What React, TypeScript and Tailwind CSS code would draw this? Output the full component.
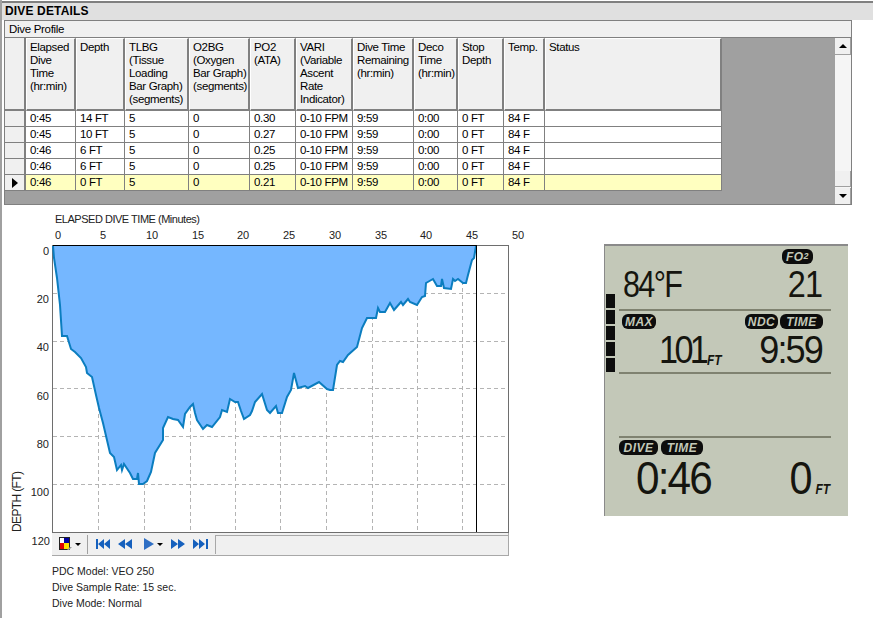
const columns = [
  ['Elapsed', 'Dive', 'Time', '(hr:min)'],
  ['Depth'],
  ['TLBG', '(Tissue', 'Loading', 'Bar Graph)', '(segments)'],
  ['O2BG', '(Oxygen', 'Bar Graph)', '(segments)'],
  ['PO2', '(ATA)'],
  ['VARI', '(Variable', 'Ascent', 'Rate', 'Indicator)'],
  ['Dive Time', 'Remaining', '(hr:min)'],
  ['Deco', 'Time', '(hr:min)'],
  ['Stop', 'Depth'],
  ['Temp.'],
  ['Status'],
];

const rows = [
  ['0:45', '14 FT', '5', '0', '0.30', '0-10 FPM', '9:59', '0:00', '0 FT', '84 F', ''],
  ['0:45', '10 FT', '5', '0', '0.27', '0-10 FPM', '9:59', '0:00', '0 FT', '84 F', ''],
  ['0:46', '6 FT', '5', '0', '0.25', '0-10 FPM', '9:59', '0:00', '0 FT', '84 F', ''],
  ['0:46', '6 FT', '5', '0', '0.25', '0-10 FPM', '9:59', '0:00', '0 FT', '84 F', ''],
  ['0:46', '0 FT', '5', '0', '0.21', '0-10 FPM', '9:59', '0:00', '0 FT', '84 F', ''],
];

const profile =
  '53,246 54,258 57,278 60,305 62,336 67,336 71,349 75,352 81,358 86,367 87,373 92,377 96,395 99,408 103,423 110,453 114,457 117,470 121,465 122,470 124,464 130,473 133,479 137,479 138,473 139,484 143,484 147,481 151,472 155,453 163,440 163,428 168,417 173,419 178,420 183,427 185,414 190,407 193,404 195,413 197,420 203,429 207,425 212,427 220,417 222,410 227,412 230,399 235,402 238,402 241,411 244,419 250,415 252,411 255,402 262,394 267,410 270,413 276,406 278,413 282,413 287,397 291,390 294,373 298,388 305,386 308,388 319,382 327,389 330,390 333,390 337,365 340,361 343,362 348,355 357,347 362,328 367,318 376,318 378,308 380,312 385,312 390,303 394,310 401,302 403,305 408,299 410,302 417,305 422,297 425,296 426,283 433,279 437,286 441,286 442,279 444,288 451,289 453,279 455,281 458,279 463,283 466,283 468,275 472,260 474,258 476,246';

const xTicks = [
  [58, 98.5, '0'],
  [103, 144.5, '5'],
  [152, 190.5, '10'],
  [198, 235.5, '15'],
  [243, 280.5, '20'],
  [289, 326.5, '25'],
  [335, 372.5, '30'],
  [381, 417.5, '35'],
  [426, 462.5, '40'],
  [472, 0, '45'],
  [518, 0, '50'],
] as const;

const yTicks = [
  [255, 0, '0'],
  [303, 293.5, '20'],
  [351, 341.5, '40'],
  [400, 388.5, '60'],
  [448, 436.5, '80'],
  [496, 484.5, '100'],
] as const;

const ProfileChart = () => (
  <svg width="530" height="323" viewBox="0 210 530 323" className="block text-[11px]">
    <text x="55" y="223" fill="#222" textLength="145">ELAPSED DIVE TIME (Minutes)</text>
    {xTicks.map(([tx, , label]) => (
      <text key={label} x={tx} y="239" textAnchor="middle" fill="#222">{label}</text>
    ))}
    {yTicks.map(([ty, , label]) => (
      <text key={label} x="49" y={ty} textAnchor="end" fill="#222">{label}</text>
    ))}
    <text transform="translate(21 532) rotate(-90)" fill="#222" fontSize="12" textLength="61">DEPTH (FT)</text>

    <rect x="52.5" y="245.5" width="456" height="287" fill="#fff" stroke="#6e6e6e" />
    <g stroke="#b4b4b4" strokeDasharray="4 3">
      {xTicks.filter(([, gx]) => gx > 0).map(([, gx, label]) => (
        <line key={label} x1={gx} y1="246" x2={gx} y2="532" />
      ))}
      {yTicks.filter(([, gy]) => gy > 0).map(([, gy, label]) => (
        <line key={label} x1="53" y1={gy} x2="508" y2={gy} />
      ))}
    </g>
    <polygon points={`53,246 ${profile} 476,246`} fill="#75b7ff" />
    <polyline points={profile} fill="none" stroke="#0b7dbf" strokeWidth="2" />
    <line x1="53" y1="245.5" x2="477" y2="245.5" stroke="#000" />
    <line x1="476.5" y1="245" x2="476.5" y2="532" stroke="#000" />
  </svg>
);

const Triangle = ({ d }: { d: string }) => (
  <svg width="16" height="12" viewBox="0 0 16 12" className="block">
    <path d={d} fill="#1560bd" />
  </svg>
);

const ChartToolbar = () => (
  <div className="flex">
    <div className="w-[52px] pt-[1px] pr-[2px] text-right text-[11px] leading-[14px] text-[#222]">120</div>
    <div className="flex h-[23px] w-[458px] items-center border-r border-b border-[#a8a8a8] bg-[#f0f0f0] pl-[7px]">
      <svg width="13" height="14" viewBox="0 0 13 14" className="block">
        <rect x="0.5" y="0.5" width="10" height="12" fill="#fff" stroke="#222" />
        <rect x="5" y="1" width="5" height="5" fill="#0000a0" />
        <rect x="1" y="6" width="4" height="6" fill="#e00000" />
        <rect x="5" y="6" width="5" height="6" fill="#ffe000" />
        <path d="M11 10h2l-3 3h-2z" fill="#999" />
      </svg>
      <span className="ml-[3px] h-0 w-0 border-x-[3px] border-t-[3px] border-x-transparent border-t-black" />
      <span className="mx-[6px] h-[19px] w-px bg-[#a0a0a0]" />
      <div className="flex w-[124px] items-center pl-[1px]">
        <Triangle d="M1 1h2v10H1zM3 6l6-5v10zM9 6l6-5v10z" />
        <span className="w-[7px]" />
        <Triangle d="M0 6l7-5v10zM7 6l7-5v10z" />
        <span className="w-[10px]" />
        <svg width="11" height="12" viewBox="0 0 11 12" className="block">
          <path d="M0 0l10 6-10 6z" fill="#2f6fc4" />
        </svg>
        <span className="mx-[2px] h-0 w-0 border-x-[3px] border-t-[3px] border-x-transparent border-t-black" />
        <span className="w-[6px]" />
        <Triangle d="M0 1l7 5-7 5zM7 1l7 5-7 5z" />
        <span className="w-[6px]" />
        <Triangle d="M0 1l6 5-6 5zM6 1l6 5-6 5zM13 1h2v10h-2z" />
      </div>
      <div className="ml-[-3px] h-[19px] flex-1 border-t border-l border-[#a8a8a8]" />
    </div>
  </div>
);

const Pill = ({ children, w }: { children: React.ReactNode; w: string }) => (
  <span className={`flex h-[15px] items-center justify-center rounded-[6px] bg-[#0d0d0d] text-[12px] leading-none font-bold tracking-[0.5px] text-[#c3c8b8] italic ${w}`}>
    {children}
  </span>
);

const Segments = () => (
  <div className="absolute top-[48px] left-[1px] flex w-[9px] flex-col gap-[2px]">
    {[0, 1, 2, 3, 4].map((i) => (
      <div key={i} className="h-[14px] bg-[#0d0d0d]" />
    ))}
  </div>
);

const LcdPanel = () => (
  <div className="relative mt-[39px] ml-[95px] flex h-[272px] w-[244px] flex-col border-t-2 border-l border-[#8a8a8a] bg-[#c3c8b8] text-[#15150f]">
    <Segments />
    <div className="flex justify-end pt-[3px] pr-[35px]">
      <Pill w="w-[31px]">
        FO<span className="text-[9px]">2</span>
      </Pill>
    </div>
    <div className="flex h-[45px] justify-between pt-[1px] pr-[26px] pl-[18px] text-[36px] leading-[40px]">
      <span className="origin-left scale-x-[0.85] tracking-[-2px]">84°F</span>
      <span className="origin-right scale-x-[0.9] tracking-[-1px]">21</span>
    </div>
    <div className="mr-[17px] ml-[14px] h-[2px] bg-[#7f8270]" />
    <div className="flex justify-between pt-[3px] pr-[25px] pl-[17px]">
      <Pill w="w-[34px]">MAX</Pill>
      <div className="flex gap-[2px]">
        <Pill w="w-[33px]">NDC</Pill>
        <Pill w="w-[43px]">TIME</Pill>
      </div>
    </div>
    <div className="flex h-[43px] items-end justify-between pr-[26px] pb-[3px] pl-[54px]">
      <div className="flex items-end">
        <span className="origin-left scale-x-[0.9] text-[38px] leading-[38px] tracking-[-4px]">101</span>
        <span className="mb-[1px] ml-[-3px] origin-left scale-x-[0.85] text-[14px] leading-[15px] font-bold italic">FT</span>
      </div>
      <span className="origin-right scale-x-[0.95] text-[38px] leading-[38px] tracking-[-2px]">9:59</span>
    </div>
    <div className="mr-[17px] ml-[14px] h-[2px] bg-[#7f8270]" />
    <div className="h-[62px]" />
    <div className="mr-[17px] ml-[14px] h-[2px] bg-[#7f8270]" />
    <div className="flex gap-[3px] pt-[2px] pl-[14px]">
      <Pill w="w-[39px]">DIVE</Pill>
      <Pill w="w-[42px]">TIME</Pill>
    </div>
    <div className="flex items-end justify-between pr-[18px] pl-[31px]">
      <span className="origin-left scale-x-[0.92] text-[46px] leading-[46px] tracking-[-2px]">0:46</span>
      <div className="flex items-end">
        <span className="origin-right scale-x-[0.9] text-[46px] leading-[46px]">0</span>
        <span className="mb-[4px] origin-right scale-x-[0.85] text-[14px] leading-[15px] font-bold italic">FT</span>
      </div>
    </div>
  </div>
);

export default function App() {
  return (
    <div className="h-[618px] w-[873px] overflow-hidden border-l-2 border-[#a0a0a0] bg-white font-['Liberation_Sans',sans-serif] text-[11px] text-black">
      <div className="h-[3px] border-b-2 border-[#808080] bg-white" />
      <div className="h-[17px] bg-[#e0e0e0] pl-[3px] text-[12px] leading-[16px] font-bold tracking-[0.15px]">DIVE DETAILS</div>

      <div className="ml-[2px] flex h-[185px] w-[848px] flex-col border border-[#808080] bg-[#a0a0a0]">
        <div className="h-[17px] border-b border-[#808080] bg-[#f0f0f0] pl-[4px] text-[11.5px] leading-[16px] tracking-[-0.3px]">Dive Profile</div>
        <div className="flex flex-1 text-[11.5px] tracking-[-0.35px]">
          <div className="flex-1">
            <div className="grid w-[717px] grid-cols-[21px_50px_49px_64px_61px_46px_57px_61px_44px_46px_41px_177px]">
              <div className="h-[73px] border-r-2 border-b-2 border-[#808080] bg-[#f0f0f0]" />
              {columns.map((c) => (
                <div key={c[0]} className="h-[73px] border-t border-r-2 border-b-2 border-l border-white border-r-[#808080] border-b-[#808080] bg-[#f0f0f0] pt-[2px] pl-[3px] leading-[13px]">
                  {c.map((line) => (
                    <div key={line} className="whitespace-nowrap">{line}</div>
                  ))}
                </div>
              ))}
              {rows.map((r, i) => (
                <div key={i} className="contents">
                  <div className="flex h-[16px] items-center justify-center border-r-2 border-b border-[#808080] bg-[#f0f0f0]">
                    {i === rows.length - 1 && (
                      <span className="h-0 w-0 border-y-[5px] border-l-[6px] border-y-transparent border-l-black" />
                    )}
                  </div>
                  {r.map((v, j) => (
                    <div
                      key={j}
                      className={`h-[16px] border-r border-b border-[#808080] pl-[4px] leading-[15px] ${i === rows.length - 1 ? 'bg-[#ffffc0]' : 'bg-white'}`}
                    >
                      {v}
                    </div>
                  ))}
                </div>
              ))}
            </div>
          </div>
          <div className="flex w-[16px] flex-col bg-[#f5f5f5]">
            <div className="flex h-[17px] items-center justify-center border-r border-b border-[#a0a0a0] bg-[#f0f0f0]">
              <span className="h-0 w-0 border-x-[4px] border-b-[4px] border-x-transparent border-b-black" />
            </div>
            <div className="flex-1" />
            <div className="mb-[1px] h-[16px] border-r border-b border-[#a0a0a0] bg-[#f0f0f0]" />
            <div className="flex h-[16px] items-center justify-center border-r border-[#a0a0a0] bg-[#f0f0f0]">
              <span className="h-0 w-0 border-x-[4px] border-t-[4px] border-x-transparent border-t-black" />
            </div>
          </div>
        </div>
      </div>

      <div className="flex">
        <div className="ml-[-2px] w-[509px]">
          <div className="h-[5px]" />
          <ProfileChart />
          <ChartToolbar />
          <div className="mt-[7px] pl-[52px] text-[10.5px] leading-[16px] text-[#222]">
            <div>PDC Model: VEO 250</div>
            <div>Dive Sample Rate: 15 sec.</div>
            <div>Dive Mode: Normal</div>
          </div>
        </div>
        <LcdPanel />
      </div>
    </div>
  );
}
